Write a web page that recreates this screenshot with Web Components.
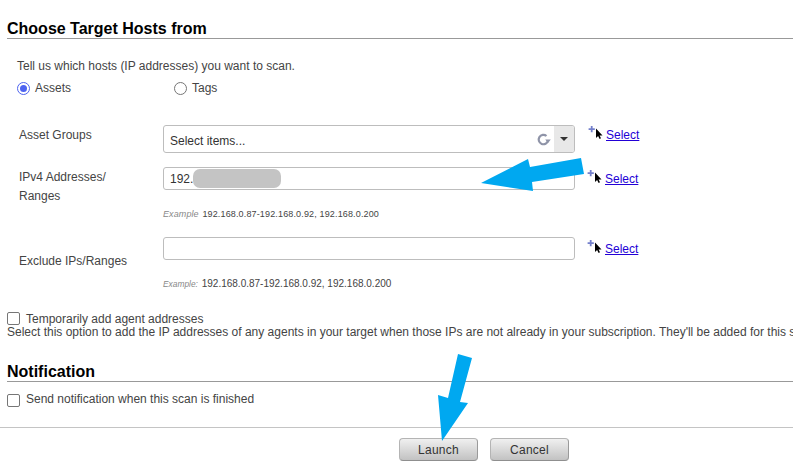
<!DOCTYPE html>
<html>
<head>
<meta charset="utf-8">
<title>Launch scan</title>
<style>
  html, body { margin: 0; height: 100%; overflow: hidden; background: #fff; }
  body { font: 12px "Liberation Sans", Arial, sans-serif; color: #333; }
</style>
</head>
<body>
<scan-page></scan-page>

<script>
const FONT = '"Liberation Sans", Arial, sans-serif';

class SectionTitle extends HTMLElement {
  constructor() {
    super();
    this.attachShadow({ mode: 'open' });
    this.shadowRoot.innerHTML = `
      <style>
        :host { display: block; margin-left: 7px; border-bottom: 1px solid #999; height: 19px; }
        h2 { margin: 0; font: bold 16px/19px ${FONT}; color: #000; white-space: nowrap; }
      </style>
      <h2><slot></slot></h2>`;
  }
}

class RadioOption extends HTMLElement {
  constructor() {
    super();
    this.attachShadow({ mode: 'open' });
    const on = this.hasAttribute('checked');
    this.shadowRoot.innerHTML = `
      <style>
        :host { display: flex; align-items: center; gap: 5px; height: 16px; font-size: 12px; color: #444; }
        i { box-sizing: border-box; width: 13px; height: 13px; border-radius: 50%; background: #fff;
            border: 1px solid ${on ? '#4d63f0' : '#767676'}; display: flex; align-items: center; justify-content: center; }
        b { width: 7px; height: 7px; border-radius: 50%; background: #4d63f0; display: ${on ? 'block' : 'none'}; }
      </style>
      <i><b></b></i><span><slot></slot></span>`;
  }
}

class CheckOption extends HTMLElement {
  constructor() {
    super();
    this.attachShadow({ mode: 'open' });
    this.shadowRoot.innerHTML = `
      <style>
        :host { display: flex; align-items: center; gap: 6px; height: 15px; margin-left: 7px; font-size: 12px; color: #444; white-space: nowrap; }
        i { box-sizing: border-box; width: 13px; height: 13px; margin-top: 2px; border: 1px solid #767676; border-radius: 2px; background: #fff; }
        span { margin-top: -2px; }
        :host([level]) i, :host([level]) span { margin-top: 0; }
      </style>
      <i></i><span><slot></slot></span>`;
  }
}

class TextBox extends HTMLElement {
  constructor() {
    super();
    this.attachShadow({ mode: 'open' });
    this.shadowRoot.innerHTML = `
      <style>
        :host { display: flex; align-items: center; box-sizing: border-box; width: 412px; height: 23px;
                padding-left: 6px; border: 1px solid #bdbdbd; border-radius: 3px; background: #fff;
                font-size: 12px; color: #333; }
        .mask { display: none; width: 88px; height: 19px; border-radius: 7px; background: #c4c4c4; }
        :host([masked]) .mask { display: block; }
      </style>
      <slot></slot><span class="mask"></span>`;
  }
}

class ComboBox extends HTMLElement {
  constructor() {
    super();
    this.attachShadow({ mode: 'open' });
    this.shadowRoot.innerHTML = `
      <style>
        :host { display: flex; align-items: stretch; box-sizing: border-box; width: 412px; height: 28px;
                border: 1px solid #bdbdbd; border-radius: 3px; background: #fff; font-size: 12px; color: #333; }
        .text { flex: 1; padding: 8px 0 0 6px; }
        .spin { width: 21px; display: flex; align-items: center; justify-content: center; padding-top: 2px; }
        .drop { width: 20px; background: #e8e8e8; display: flex; align-items: center; justify-content: center; border-radius: 0 2px 2px 0; }
        .drop i { width: 0; height: 0; border: 4px solid transparent; border-top: 4px solid #333; border-bottom: 0; }
      </style>
      <div class="text"><slot></slot></div>
      <div class="spin">
        <svg width="14" height="14" viewBox="0 0 14 14" fill="none">
          <path d="M11 7.500A4.700 4.700 0 1 1 9.500 3" stroke="#8f94a8" stroke-width="2.200"/>
          <path d="M8.200 6.500h5.600l-2.800 3.600z" fill="#8f94a8"/>
        </svg>
      </div>
      <div class="drop"><i></i></div>`;
  }
}

class SelectLink extends HTMLElement {
  constructor() {
    super();
    this.attachShadow({ mode: 'open' });
    this.shadowRoot.innerHTML = `
      <style>
        :host { display: inline-flex; align-items: flex-start; height: 20px; font-size: 12px; }
        svg { flex: none; }
        a { color: #2200d6; text-decoration: underline; margin: 2px 0 0 2px; }
      </style>
      <svg width="16" height="16" viewBox="0 0 16 16">
        <path d="M2.800 0h1.800v2.200h2.200V4H4.600v2.200H2.800V4H.6V2.200h2.200z" fill="#7480cc"/>
        <path d="M8 2.500v9.500l2.100-2 1.500 3 1.400-.7-1.400-2.900h2.900z" fill="#000"/>
      </svg>
      <a href="#"><slot></slot></a>`;
  }
}

class FormRow extends HTMLElement {
  constructor() {
    super();
    this.attachShadow({ mode: 'open' });
    this.shadowRoot.innerHTML = `
      <style>
        :host { display: grid; grid-template-columns: 144px 412px auto; column-gap: 0; margin-left: 19px; font-size: 12px; color: #444; }
        .label { line-height: 20px; }
        .side { padding-left: 13px; }
      </style>
      <div class="label"><slot name="label"></slot></div>
      <div><slot></slot></div>
      <div class="side"><slot name="side"></slot></div>`;
  }
}

class HintText extends HTMLElement {
  constructor() {
    super();
    this.attachShadow({ mode: 'open' });
    this.shadowRoot.innerHTML = `
      <style>
        :host { display: block; font-size: 9px; line-height: 11px; color: #444; white-space: nowrap; letter-spacing: .15px; }
        :host([wide]) { font-size: 10px; letter-spacing: 0; }
        em { color: #888; font-size: 9px; letter-spacing: .1px; margin-right: 1px; }
        :host([wide]) em { font-size: 8.400px; letter-spacing: 0; }
      </style>
      <em><slot name="tag"></slot></em> <slot></slot>`;
  }
}

class PushButton extends HTMLElement {
  constructor() {
    super();
    this.attachShadow({ mode: 'open' });
    this.shadowRoot.innerHTML = `
      <style>
        :host { display: flex; align-items: center; justify-content: center; box-sizing: border-box;
                width: 79px; height: 23px; border: 1px solid #b4b4b4; border-bottom-color: #8f8f8f; border-right-color: #9a9a9a;
                border-radius: 4px; background: linear-gradient(#f0f0f0, #c2c2c2); font-size: 12px;
                letter-spacing: .25px; color: #333; }
      </style>
      <slot></slot>`;
  }
}

class ScanPage extends HTMLElement {
  constructor() {
    super();
    this.attachShadow({ mode: 'open' });
    this.shadowRoot.innerHTML = `
      <style>
        :host { display: block; position: relative; width: 793px; height: 474px; overflow: hidden; padding-top: 19px; box-sizing: border-box; }
        .intro { margin: 20px 0 0 17px; line-height: 14px; color: #444; }
        .radios { display: grid; grid-template-columns: 157px auto; justify-content: start; margin: 7px 0 0 17px; }
        .rows { margin-top: 29px; }
        .gap-1 { margin-top: 14px; }
        .gap-2 { margin-top: 17px; }
        .hint-1 { margin-top: 19px; }
        .hint-2 { margin-top: 18px; }
        .side-1 { margin-top: 1px; }
        .side-2 { margin: 3px 0 0 -1px; }
        .side-3 { margin: 3px 0 0 -1px; }
        .ranges { display: block; line-height: 19px; margin-top: 1px; }
        .agent { margin-top: 21px; }
        .desc { margin: -1px 0 0 7px; line-height: 14px; white-space: nowrap; color: #444; }
        .notify { margin-top: 23px; }
        .send { margin-top: 10px; }
        .footer { margin-top: 20px; border-top: 1px solid #c4c4c4; padding: 10px 0 0 399px; display: flex; gap: 12px; }
        .arrows { position: absolute; left: 0; top: 0; pointer-events: none; }
      </style>
      <section-title>Choose Target Hosts from</section-title>
      <div class="intro">Tell us which hosts (IP addresses) you want to scan.</div>
      <div class="radios">
        <radio-option checked>Assets</radio-option>
        <radio-option>Tags</radio-option>
      </div>
      <div class="rows">
        <form-row>
          <span slot="label">Asset Groups</span>
          <combo-box>Select items...</combo-box>
          <select-link slot="side" class="side-1">Select</select-link>
        </form-row>
        <form-row class="gap-1">
          <span slot="label" class="ranges">IPv4 Addresses/<br>Ranges</span>
          <text-box masked>192.</text-box>
          <hint-text class="hint-1"><span slot="tag">Example</span>192.168.0.87-192.168.0.92, 192.168.0.200</hint-text>
          <select-link slot="side" class="side-2">Select</select-link>
        </form-row>
        <form-row class="gap-2">
          <span slot="label" style="display:block;margin-top:14px">Exclude IPs/Ranges</span>
          <text-box></text-box>
          <hint-text class="hint-2" wide><span slot="tag">Example:</span>192.168.0.87-192.168.0.92, 192.168.0.200</hint-text>
          <select-link slot="side" class="side-3">Select</select-link>
        </form-row>
      </div>
      <check-option class="agent" level>Temporarily add agent addresses</check-option>
      <div class="desc">Select this option to add the IP addresses of any agents in your target when those IPs are not already in your subscription. They'll be added for this scan only.</div>
      <section-title class="notify">Notification</section-title>
      <check-option class="send">Send notification when this scan is finished</check-option>
      <div class="footer">
        <push-button>Launch</push-button>
        <push-button>Cancel</push-button>
      </div>
      <svg class="arrows" width="793" height="474" viewBox="0 0 793 474">
        <polygon fill="#00a8f0" points="481,183 528,159 530,167 581,158 584,174 532,182 533,191"/>
        <polygon fill="#00a8f0" points="458,354 472,358 460,402 468,403 442,441 438,395 448,398"/>
      </svg>`;
  }
}

customElements.define('section-title', SectionTitle);
customElements.define('radio-option', RadioOption);
customElements.define('check-option', CheckOption);
customElements.define('text-box', TextBox);
customElements.define('combo-box', ComboBox);
customElements.define('select-link', SelectLink);
customElements.define('form-row', FormRow);
customElements.define('hint-text', HintText);
customElements.define('push-button', PushButton);
customElements.define('scan-page', ScanPage);
</script>
</body>
</html>
